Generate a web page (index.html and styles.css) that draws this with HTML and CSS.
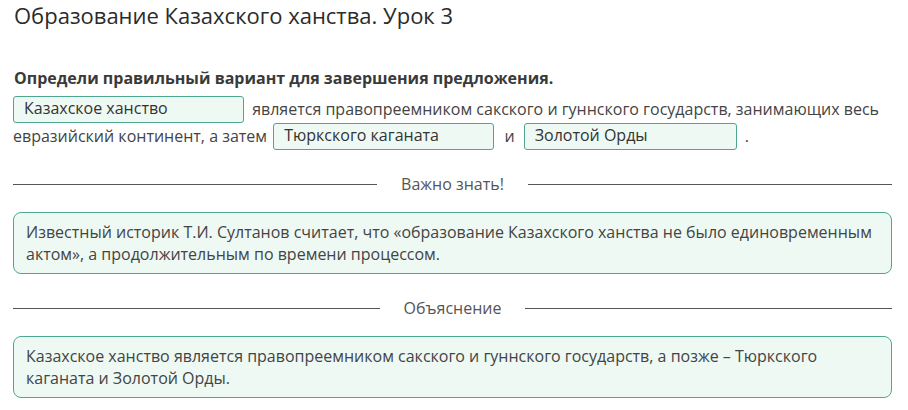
FILE: index.html
```html
<!DOCTYPE html>
<html lang="ru">
<head>
<meta charset="utf-8">
<link rel="stylesheet" href="styles.css">
</head>
<body>
<div class="page">
  <h1 class="title">Образование Казахского ханства. Урок 3</h1>
  <p class="task">Определи правильный вариант для завершения предложения.</p>
  <div class="sentence"><span class="slot slot-1">Казахское ханство</span> является правопреемником сакского и гуннского государств, занимающих весь евразийский континент, а затем <span class="slot slot-2">Тюркского каганата</span> и <span class="slot slot-3">Золотой Орды</span> .</div>
  <div class="divider"><span>Важно знать!</span></div>
  <div class="note">Известный историк Т.И. Султанов считает, что «образование Казахского ханства не было единовременным актом», а продолжительным по времени процессом.</div>
  <div class="divider"><span>Объяснение</span></div>
  <div class="note">Казахское ханство является правопреемником сакского и гуннского государств, а позже – Тюркского каганата и Золотой Орды.</div>
</div>
</body>
</html>
```
FILE: styles.css
```css
html, body {
  margin: 0;
  background: #ffffff;
}
body {
  font-family: "Open Sans", "Noto Sans", sans-serif;
  color: #3c3c3c;
}
.page {
  width: 879px;
  padding: 0 0 0 13px;
}
.title {
  margin: 0 0 0 1px;
  font-size: 22px;
  font-weight: 400;
  line-height: 30px;
  color: #2b2b2b;
}
.task {
  margin: 37px 0 0 1px;
  font-size: 16px;
  font-weight: 700;
  line-height: 22px;
  color: #3a3a3a;
}
.sentence {
  margin-top: 7px;
  font-size: 16px;
  line-height: 27px;
  color: #444;
}
.slot {
  display: inline-block;
  box-sizing: border-box;
  height: 27px;
  line-height: 23px;
  padding: 0 10px;
  border: 1px solid #4da88f;
  border-radius: 3px;
  background: #eef9f4;
  color: #333;
  vertical-align: top;
}
.slot-1 { width: 231px; margin-right: 4px; }
.slot-2 { width: 221px; margin: 0 6px 0 2px; }
.slot-3 { width: 213px; margin: 0 4px 0 5px; }
.divider {
  display: flex;
  align-items: center;
  gap: 24px;
  margin-top: 23px;
  font-size: 16px;
  color: #555;
  line-height: 22px;
}
.divider::before, .divider::after {
  content: "";
  flex: 1;
  height: 1px;
  background: #555;
}
.note {
  margin-top: 17px;
  box-sizing: border-box;
  min-height: 62px;
  padding: 8px 12px;
  border: 1px solid #4da88f;
  border-radius: 8px;
  background: #eef9f4;
  font-size: 16px;
  line-height: 22px;
  color: #444;
}
```
